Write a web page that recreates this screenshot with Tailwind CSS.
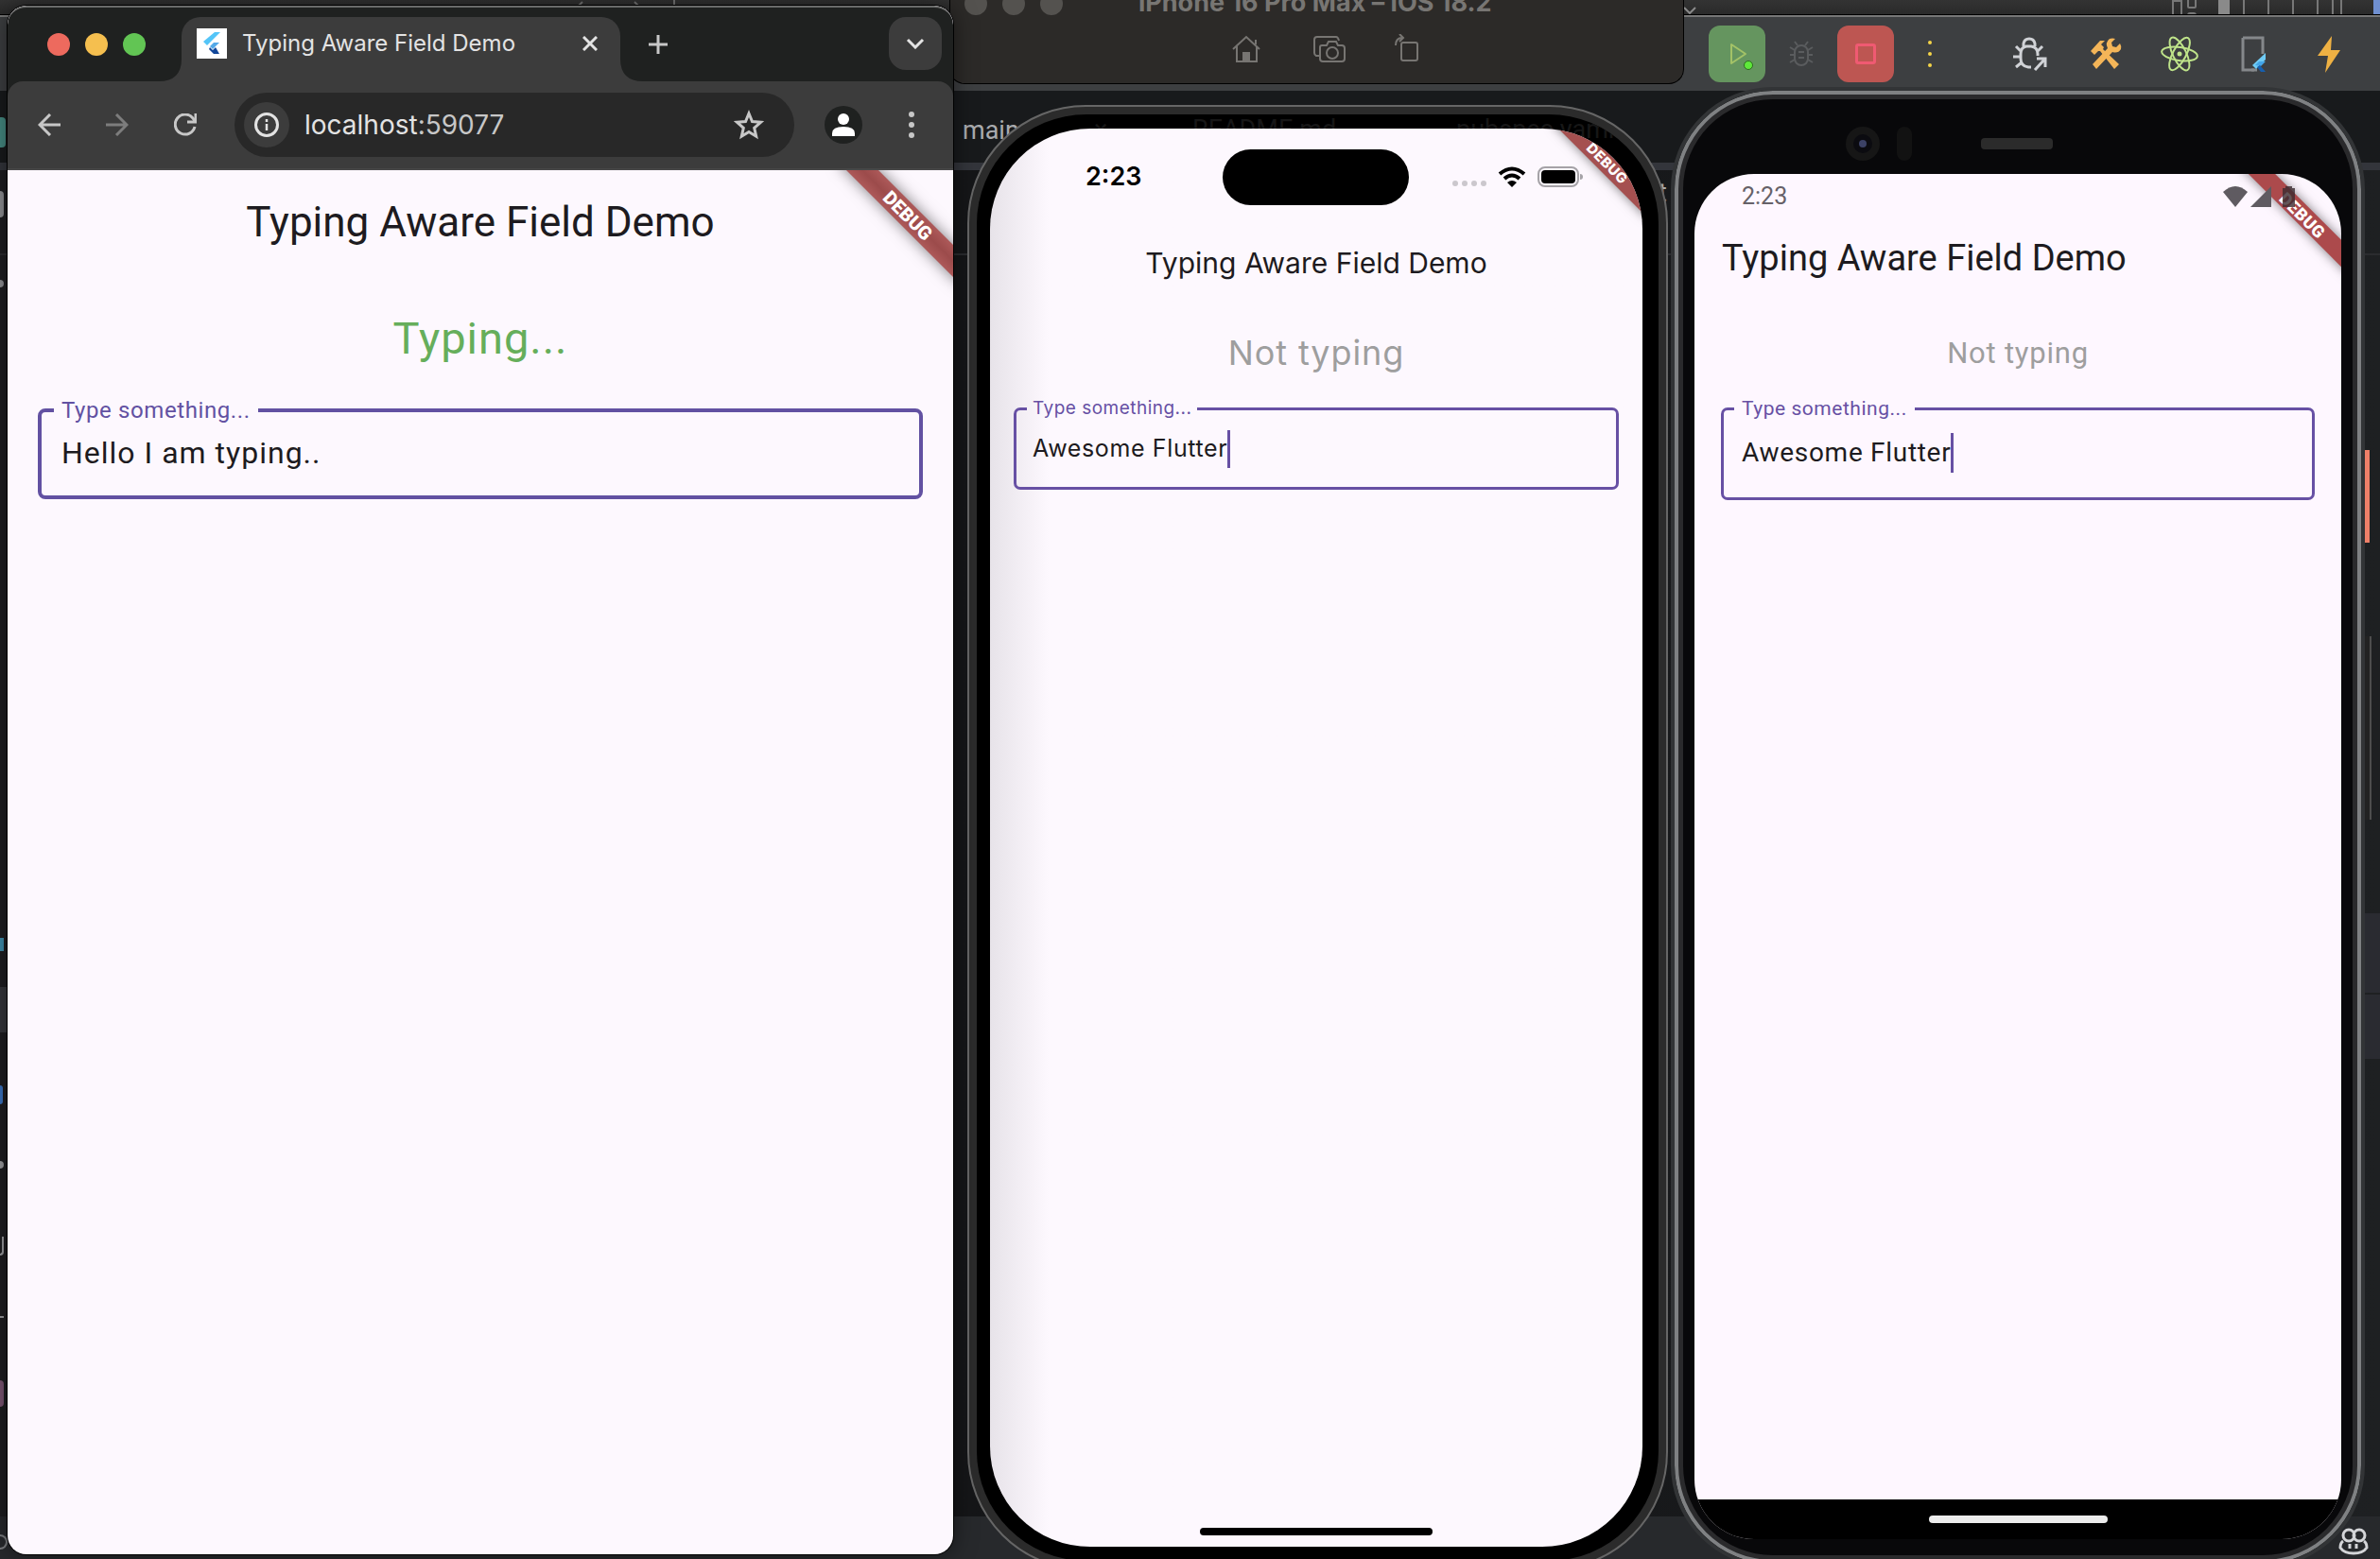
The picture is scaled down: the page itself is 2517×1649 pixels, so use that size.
<!DOCTYPE html>
<html lang="en">
<head>
<meta charset="utf-8">
<title>Typing Aware Field Demo</title>
<script src="https://cdn.jsdelivr.net/npm/@tailwindcss/browser@4"></script>
</head>
<body class="bg-[#1e2022] font-[Roboto,sans-serif]">
<main class="relative h-screen w-full overflow-hidden bg-[#1e2022]">

  <!-- Editor window behind everything -->
  <div class="flex h-full flex-col">
    <div class="relative h-4 shrink-0 overflow-hidden border-b border-black bg-gradient-to-b from-[#333333] to-[#2a2a2a]">
      <svg class="absolute left-[600px] top-0 h-4 w-[120px]" viewBox="0 0 120 16" fill="none" stroke="#777" stroke-width="2"><path d="M16 2l-6 6M71 2l6 6M113 0v16" /></svg>
      <svg class="absolute left-[1776px] top-0 h-4 w-6" viewBox="0 0 24 16" fill="none" stroke="#8a8a8a" stroke-width="2"><path d="M5 8l6 6 6-6" /></svg>
      <svg class="absolute right-0 top-0 h-4 w-[221px]" viewBox="0 0 221 16" fill="none" stroke="#777" stroke-width="2"><path d="M2 16V1h9v15M18 0v7q0 1 1 1h6q1 0 1-1V0M18 16q0-2 2-2h4q2 0 2 2M77 0v16M103 0v16M129 0v16M155 0v16M171 0v16M180 0v16" /><path d="M50 0h12v16H50z" fill="#8a8a8a" stroke="none" /><path d="M214 0h7v16h-7z" fill="#6f8fd0" stroke="none" /></svg>
    </div>
    <div class="flex h-20 shrink-0 items-center justify-end border-t-2 border-[#777] bg-[#3d3f41] pr-[34px]">
      <div class="flex items-center">
        <button aria-label="Run" class="flex size-[60px] items-center justify-center rounded-[12px] bg-[#65955f]"><svg class="size-10" viewBox="0 0 40 40" fill="none"><path d="M14 10v20l15-10z" stroke="#a3c267" stroke-width="2" stroke-linejoin="round" /><circle cx="32" cy="32" r="4.500" fill="#5fe83a" stroke="#2c6a20" /></svg></button>
        <button aria-label="Debug" class="ml-[23px] flex size-[30px] items-center justify-center"><svg class="size-[30px]" viewBox="0 0 30 30" fill="none" stroke="#5a5c5e" stroke-width="2"><rect x="8" y="6" width="14" height="21" rx="7" /><path d="M11 6L8 2M19 6l3-4M8 11L3 8M8 16H3M8 21l-5 3M22 11l5-3M22 16h5M22 21l5 3M12 13h6M12 19h6" /></svg></button>
        <button aria-label="Stop" class="ml-[23px] flex size-[60px] items-center justify-center rounded-[12px] bg-[#bd5652]"><span class="size-[22px] rounded-[3px] border-3 border-[#f05a72]"></span></button>
        <button aria-label="More run options" class="ml-[34px] flex w-2 flex-col items-center gap-2"><i class="size-1 rounded-full bg-[#f5d547]"></i><i class="size-1 rounded-full bg-[#f5d547]"></i><i class="size-1 rounded-full bg-[#f5d547]"></i></button>
        <button aria-label="Attach debugger" class="ml-[82px]"><svg class="size-10" viewBox="0 0 40 40" fill="none" stroke="#d0d2d6" stroke-width="3"><path d="M21 34h-3q-8-1-8-9v-5q0-7 6-8h5q7 1 7 8v2M13 12V9q1-5 6-5t6 5v3M10 17l-5-5M10 23H2M11 29l-6 5M28 17l5-5M25 37l11-12M27 25h9v9" /></svg></button>
        <button aria-label="Build tools" class="ml-10"><svg class="size-10" viewBox="0 0 40 40" fill="#f4b558"><path d="M4 17l4 4 4-4 2 0 15 19 5-5L17 15l1-2-3-3 4-4h-5z" /><path d="M24 4q-5 4-2 10L6 31l4 5 17-18q6 2 9-3 1-3-1-6l-4 4-4-1-1-4 4-4q-3-1-6 0z" /></svg></button>
        <button aria-label="Flutter inspector" class="ml-9"><svg class="size-11" viewBox="0 0 44 44" fill="none" stroke="#bfe48a" stroke-width="2"><ellipse cx="22" cy="22" rx="19" ry="7" transform="rotate(8 22 22)" /><ellipse cx="22" cy="22" rx="19" ry="7" transform="rotate(64 22 22)" /><ellipse cx="22" cy="22" rx="19" ry="7" transform="rotate(118 22 22)" /><circle cx="22" cy="22" r="2.500" fill="#bfe48a" stroke="none" /></svg></button>
        <button aria-label="Device" class="ml-9"><svg class="size-11" viewBox="0 0 44 44" fill="none"><path d="M9 5h21v17M21 39H9V5" stroke="#85888b" stroke-width="3" /><path d="M18 39h6" stroke="#85888b" stroke-width="3" /><path d="M33 21L19 34l4 4 10-10z" fill="#6fcbf5" /><path d="M22 34l4-4 7 0-5 5z" fill="#43a5e8" /><path d="M24 36l3-2 6 7h-5z" fill="#175fae" /></svg></button>
        <button aria-label="Hot reload" class="ml-9"><svg class="size-10" viewBox="0 0 40 40"><path d="M23 1L8 22h11l-3 18 16-24H22z" fill="#efb143" /></svg></button>
      </div>
    </div>
    <div class="flex h-[76px] shrink-0 items-center bg-[#181a1c] pt-2 pl-[1018px] text-[27px] text-[#a9abae]">main.dart</div>
    <div class="h-2 shrink-0 bg-[#33353b]"></div>
    <div class="flex-1 bg-gradient-to-r from-[#1e1f21] via-[#131416] to-[#1e2022]">
      <div class="h-[88px] pt-1 pl-[1738px] text-[27px] text-[#a9abae]">St</div>
      <div class="h-0.5 bg-[#2b2c2f]"></div>
      <div class="ml-auto mt-[696px] flex w-4 flex-col gap-0.5"><i class="h-[84px] bg-[#2a2b31]"></i><i class="h-[68px] bg-[#2a2b31]"></i></div>
    </div>
    <div class="flex h-[45px] shrink-0 items-center justify-end bg-[#27292c] pt-2 pr-3">
      <svg class="size-8" viewBox="0 0 32 32" fill="none" stroke="#d4d5d8" stroke-width="3"><circle cx="11" cy="9" r="6" /><circle cx="22" cy="9" r="6" /><path d="M5 15q-3 2-3 7 4 6 14 6t14-6q0-5-3-7M12 18v5M19 18v5" /></svg>
    </div>
  </div>

  <!-- Side rail of the editor, partly covered by the browser -->
  <div aria-hidden="true" class="absolute bottom-0 left-0 top-4 w-2 overflow-hidden text-[#9a9c9f]">
    <div class="flex h-full flex-col">
      <i class="mt-[108px] h-8 w-1.5 rounded-r bg-[#458a82]"></i>
      <i class="mt-[46px] h-7 w-1 rounded-r-full bg-[#8d8f92]"></i>
      <i class="mt-[66px] h-2 w-1 rounded-r-full bg-[#8d8f92]"></i>
      <i class="mt-[688px] h-3.5 w-1 bg-[#3f8fae]"></i>
      <i class="mt-[38px] h-12 w-2 bg-[#35373b]"></i>
      <i class="mt-[56px] h-5 w-[3px] rounded-r bg-[#3a74c0]"></i>
      <i class="mt-[60px] h-2 w-1 rounded-r-full bg-[#9a9c9f]"></i>
      <i class="mt-[72px] h-5 w-1 rounded-br border-b-2 border-r-2 border-[#9a9c9f]"></i>
      <i class="mt-[64px] h-0.5 w-1 bg-[#9a9c9f]"></i>
      <i class="mt-[66px] h-7 w-1 rounded-r bg-[#7b5673]"></i>
      <i class="mt-auto mb-2.5 h-4 w-2 rounded-r-full border-2 border-l-0 border-[#7a7c7f]"></i>
    </div>
  </div>

  <!-- Simulator toolbar -->
  <section class="absolute left-[1004px] top-0 h-[89px] w-[777px] overflow-hidden rounded-b-[16px] border border-t-0 border-black bg-[#2c2a28]">
    <div class="flex h-4 items-center">
      <div class="-mt-2 ml-[15px] flex gap-4"><i class="size-6 rounded-full bg-[#54524f]"></i><i class="size-6 rounded-full bg-[#54524f]"></i><i class="size-6 rounded-full bg-[#54524f]"></i></div>
      <h2 class="-mt-[10px] ml-20 font-[Inter,sans-serif] text-[27px] leading-8 font-bold text-[#787673]">iPhone 16 Pro Max – iOS 18.2</h2>
    </div>
    <div class="mt-5 flex gap-12 pl-[293px] text-[#777572]">
      <button aria-label="Home"><svg class="h-8 w-10" viewBox="0 0 32 32" fill="none" stroke="currentColor" stroke-width="2"><path d="M2 16L16 3l14 13M6 13v16h21V13M26 11V6" /><path d="M13 20h6v9h-6z" fill="currentColor" /></svg></button>
      <button aria-label="Screenshot"><svg class="h-8 w-10" viewBox="0 0 36 32" fill="none" stroke="currentColor" stroke-width="2"><path d="M8 23H4q-2-1-2-3V6q0-3 3-3h20q2 0 3 4" /><path d="M10 12h5l2-4h8l2 4h4q3 0 3 3v11q0 3-3 3H11q-3 0-3-3V14q0-2 2-2z" /><circle cx="21" cy="20" r="6" /></svg></button>
      <button aria-label="Rotate"><svg class="h-8 w-7" viewBox="1 0 28 32" fill="none" stroke="currentColor" stroke-width="2"><rect x="9" y="9" width="17" height="19" rx="2" /><path d="M3 12q0-8 7-8M7 0l4 4-4 4" /></svg></button>
    </div>
  </section>

  <!-- iPhone -->
  <section class="absolute left-[1023px] top-[111px] h-[1550px] w-[741px] rounded-[125px] border-2 border-[#666] bg-[#2b2b2b] p-2">
    <div class="h-full overflow-hidden rounded-[116px] bg-black">
      <div aria-hidden="true" class="flex pl-[124px] text-[27px] leading-8 text-[#171717]"><span class="w-[104px]">×</span><span class="w-[279px]">README.md</span><span>pubspec.yaml</span></div>
    </div>
    <div class="absolute top-[23px] right-[25px] bottom-[23px] left-[22px] overflow-hidden rounded-[106px] bg-[#fdf8fe] font-[Inter,sans-serif]">
      <div class="flex h-full flex-col bg-gradient-to-r from-[#e7e3e9] to-[#fdf8fe] to-9%">
        <div class="flex h-[102px] items-center">
          <time class="w-[246px] pl-[101px] text-[27px] font-semibold text-black">2:23</time>
          <div class="h-[59px] w-[197px] rounded-full bg-black"></div>
          <div class="ml-[46px] flex items-center gap-3">
            <div class="mt-3.5 flex gap-1"><i class="size-1.5 rounded-sm bg-[#cbc7cd]"></i><i class="size-1.5 rounded-sm bg-[#cbc7cd]"></i><i class="size-1.5 rounded-sm bg-[#cbc7cd]"></i><i class="size-1.5 rounded-sm bg-[#cbc7cd]"></i></div>
            <svg class="h-[22px] w-[30px]" viewBox="0 0 30 22" fill="none" stroke="#000" stroke-width="4"><path d="M2 8q13-11 26 0M7 13q8-7 16 0" /><path d="M10 17q5-4 10 0l-5 5z" fill="#000" stroke="none" /></svg>
            <svg class="h-[22px] w-12" viewBox="0 0 48 22"><rect x="1" y="1" width="42" height="20" rx="7" fill="none" stroke="#a5a2a7" stroke-width="2" /><rect x="4" y="4" width="36" height="14" rx="4" /><path d="M45 8q3 0 3 3t-3 3z" fill="#a5a2a7" /></svg>
          </div>
        </div>
        <header class="flex h-20 items-center justify-center"><h1 class="text-[30px] text-[#1d1b20]">Typing Aware Field Demo</h1></header>
        <div class="flex flex-col px-[25px] pt-7">
          <p class="text-center text-[36px] leading-[54px] tracking-wide text-[#9e9e9e]">Not typing</p>
          <fieldset class="mt-[21px] rounded-[7px] border-3 border-[#6750a4] px-[17px] pb-2">
            <legend class="-ml-1.5 px-1.5 text-[19px] leading-[22px] tracking-wide text-[#6750a4]"><label for="ios-field">Type something...</label></legend>
            <div class="flex h-16 items-center"><input id="ios-field" value="Awesome Flutter" class="field-sizing-content bg-transparent text-[25px] tracking-wide text-[#1d1b20] outline-none"><i class="h-10 w-[3px] bg-[#6750a4]"></i></div>
          </fieldset>
        </div>
        <div class="mx-auto mt-auto mb-3 h-2 w-[246px] rounded-full bg-black"></div>
      </div>
      <div class="absolute right-[-32px] top-[28px] flex h-[19px] w-[140px] rotate-45 items-center justify-center bg-[#a55050] text-[15px] font-extrabold tracking-wide text-white shadow-[0_0_12px_rgba(0,0,0,0.5)]">DEBUG</div>
    </div>
  </section>

  <!-- Pixel -->
  <section class="absolute left-[1767px] top-[92px] h-[1566px] w-[734px]">
    <i class="absolute left-full top-[384px] h-[98px] w-[5px] bg-[#ee7f68]"></i>
    <i class="absolute left-full top-[581px] h-[194px] w-[7px] border-r-2 border-[#4d4d4d] bg-[#222]"></i>
    <div class="h-full rounded-[108px] border-4 border-[#323436] bg-[#08080a] shadow-[inset_0_0_0_4px_#7f8183,inset_0_0_0_9px_#2a2a2c]">
      <div class="flex h-[88px] items-center pt-6 pl-[181px]">
        <span class="flex size-9 items-center justify-center rounded-full bg-[#161616]"><span class="flex size-5 items-center justify-center rounded-full bg-[#0b0b10]"><i class="size-2 rounded-full bg-[#3c4266]"></i></span></span>
        <span class="ml-[18px] h-9 w-4 rounded-full bg-[#121212]"></span>
        <span class="ml-[73px] h-3 w-[76px] rounded bg-[#2b2b2b]"></span>
      </div>
      <div class="relative ml-[21px] h-[1444px] w-[684px] overflow-hidden rounded-[63px] bg-[#fef7ff]">
        <div class="flex h-full flex-col">
          <div class="flex h-12 items-center justify-between pr-[49px] pl-[50px] text-[#666168]">
            <time class="text-[25px]">2:23</time>
            <svg class="relative z-10 h-[22px] w-[76px]" viewBox="0 0 76 22" fill="#5f5b61"><path d="M0 6Q13-6 26 6L13 22z" /><path d="M51 0v22H29z" /><path d="M63 2h3V0h7v2h3v20H63z" fill="#3b2b30" fill-opacity="0.8" /></svg>
          </div>
          <header class="flex h-[82px] items-center pl-[29px]"><h1 class="text-[38px] text-[#1d1b20]">Typing Aware Field Demo</h1></header>
          <div class="flex flex-col px-7 pt-9">
            <p class="text-center text-[31px] leading-[48px] tracking-wide text-[#9e9e9e]">Not typing</p>
            <fieldset class="mt-[22px] rounded-[7px] border-3 border-[#6750a4] px-[19px] pb-3">
              <legend class="-ml-2 px-2 text-[21px] leading-6 tracking-wide text-[#6750a4]"><label for="android-field">Type something...</label></legend>
              <div class="flex h-[70px] items-center"><input id="android-field" value="Awesome Flutter" class="field-sizing-content bg-transparent text-[28px] tracking-wide text-[#1d1b20] outline-none"><i class="h-[42px] w-[3px] bg-[#6750a4]"></i></div>
            </fieldset>
          </div>
          <div class="mt-auto flex h-[42px] justify-center bg-black pt-[17px]"><i class="h-2 w-[189px] rounded-full bg-[#ececec]"></i></div>
        </div>
        <div class="absolute right-[-38px] top-[32px] flex h-5 w-40 rotate-45 items-center justify-center bg-[#ac4a4c] pl-1 text-[18px] font-black tracking-wide text-white shadow-[0_0_12px_rgba(0,0,0,0.5)]">DEBUG</div>
      </div>
    </div>
  </section>

  <!-- Browser window -->
  <section class="absolute bottom-[5px] left-2 top-[6px] flex w-[1000px] flex-col overflow-hidden rounded-[20px] bg-[#fdf8fe] shadow-[0_0_0_1px_#000,0_0_24px_rgba(0,0,0,0.5)]">
    <div class="flex h-20 shrink-0 items-end rounded-t-[20px] border-t-2 border-[#6a6b6a] bg-[#1f2120]">
      <div class="mb-[27px] ml-[42px] flex gap-4"><i class="size-6 rounded-full bg-[#ed6a5e]"></i><i class="size-6 rounded-full bg-[#f5bf4f]"></i><i class="size-6 rounded-full bg-[#62c554]"></i></div>
      <svg class="ml-3.5 size-6 text-[#3c3c3c]" viewBox="0 0 24 24"><path d="M24 0v24H0Q24 24 24 0z" fill="currentColor" /></svg>
      <div class="flex h-[68px] w-[464px] items-start rounded-t-[20px] bg-[#3c3c3c] pt-3 pl-4 pr-6">
        <svg class="size-8 bg-white" viewBox="0 0 32 32"><path d="M19 4h6L11 18l-4-4z" fill="#54c5f8" /><path d="M18 15h6l-7 7-3-3z" fill="#54a9e8" /><path d="M14 20l3 3 3-3 4 7h-6l-5-5z" fill="#12479a" /></svg>
        <span class="ml-4 font-[Inter,sans-serif] text-[24px] leading-8 text-[#e3e3e3]">Typing Aware Field Demo</span>
        <button aria-label="Close tab" class="ml-auto pt-2 text-[#e3e3e3]"><svg class="size-4" viewBox="0 0 16 16" stroke="currentColor" stroke-width="3"><path d="M1 1l14 14M15 1L1 15" /></svg></button>
      </div>
      <svg class="size-6 text-[#3c3c3c]" viewBox="0 0 24 24"><path d="M0 0v24h24Q0 24 0 0z" fill="currentColor" /></svg>
      <button aria-label="New tab" class="mb-[29px] ml-1.5 text-[#c7c7c7]"><svg class="size-5" viewBox="0 0 20 20" stroke="currentColor" stroke-width="3"><path d="M10 0v20M0 10h20" /></svg></button>
      <button aria-label="Search tabs" class="mr-3 mb-3 ml-auto flex size-14 items-center justify-center rounded-[18px] bg-[#3c3c3c]"><svg class="h-3 w-5" viewBox="0 0 20 12" fill="none" stroke="#e3e3e3" stroke-width="3"><path d="M2 2l8 8 8-8" /></svg></button>
    </div>
    <div class="shrink-0 bg-[#1f2120]">
      <div class="flex h-[94px] items-center rounded-t-[16px] border-b-2 border-[#474747] bg-[#3c3c3c] pl-8">
        <div class="flex gap-12">
          <button aria-label="Back"><svg class="size-6" viewBox="0 0 24 24" fill="none" stroke="#c7c7c7" stroke-width="3"><path d="M24 12H2M13 1L2 12l11 11" /></svg></button>
          <button aria-label="Forward"><svg class="size-6" viewBox="0 0 24 24" fill="none" stroke="#7d7d7d" stroke-width="3"><path d="M0 12h22M11 1l11 11-11 11" /></svg></button>
          <button aria-label="Reload"><svg class="size-6" viewBox="0 0 24 24" fill="none" stroke="#c7c7c7" stroke-width="3"><path d="M22 14A10.500 10.500 0 1 1 20 5l2 3" /><path d="M23 0v9h-9" /></svg></button>
        </div>
        <div class="ml-10 flex h-[68px] w-[592px] items-center rounded-full bg-[#282828] pl-2.5 pr-8">
          <button aria-label="Site information" class="flex size-12 items-center justify-center rounded-full bg-[#3c3c3c]"><svg class="size-[26px]" viewBox="0 0 26 26" fill="none" stroke="#e3e3e3" stroke-width="3"><circle cx="13" cy="13" r="11.500" /><path d="M13 12v7M13 7v3" stroke-width="2.500" /></svg></button>
          <a href="#" class="ml-4 font-[Inter,sans-serif] text-[28px] leading-10 text-[#e3e3e3]">localhost<span class="text-[#c7c7c7]">:59077</span></a>
          <button aria-label="Bookmark" class="ml-auto"><svg class="size-8" viewBox="0 0 32 32" fill="none" stroke="#c7c7c7" stroke-width="3"><path d="M16 4l3.500 8.500 9 .8-6.800 6 2 8.900L16 23.500l-7.700 4.700 2-8.900-6.800-6 9-.8z" /></svg></button>
        </div>
        <button aria-label="Profile" class="ml-8 flex size-10 items-center justify-center rounded-full bg-[#1f2120]"><svg class="size-6" viewBox="0 0 24 24" fill="#fff"><circle cx="12" cy="6" r="6" /><path d="M0 24v-3q0-7 12-7t12 7v3z" /></svg></button>
        <button aria-label="Browser menu" class="ml-[49px] flex flex-col gap-[5px]"><i class="size-1.5 rounded-full bg-[#c7c7c7]"></i><i class="size-1.5 rounded-full bg-[#c7c7c7]"></i><i class="size-1.5 rounded-full bg-[#c7c7c7]"></i></button>
      </div>
    </div>
    <div class="relative flex-1 overflow-hidden">
      <header class="flex h-[110px] items-center justify-center"><h1 class="text-[44px] text-[#1d1b20]">Typing Aware Field Demo</h1></header>
      <div class="flex flex-col px-8 pt-[34px]">
        <p class="text-center text-[47px] leading-[68px] tracking-[1px] text-[#66ae5b]">Typing...</p>
        <fieldset class="mt-7 rounded-[8px] border-4 border-[#6251a2] px-[21px] pb-3.5">
          <legend class="-ml-2 px-2 text-[24px] leading-7 tracking-wide text-[#6251a2]"><label for="web-field">Type something...</label></legend>
          <div class="flex h-[62px] items-center"><input id="web-field" value="Hello I am typing.." class="w-full bg-transparent text-[32px] tracking-[1px] text-[#1d1b20] outline-none"></div>
        </fieldset>
      </div>
      <div class="absolute right-[-42px] top-9 flex h-6 w-[180px] rotate-45 items-center justify-center bg-gradient-to-b from-[#ad5959] via-[#9c4b4b] to-[#ad5959] text-[20px] font-black text-white shadow-[0_0_16px_rgba(0,0,0,0.5)]">DEBUG</div>
    </div>
  </section>
</main>
</body>
</html>
